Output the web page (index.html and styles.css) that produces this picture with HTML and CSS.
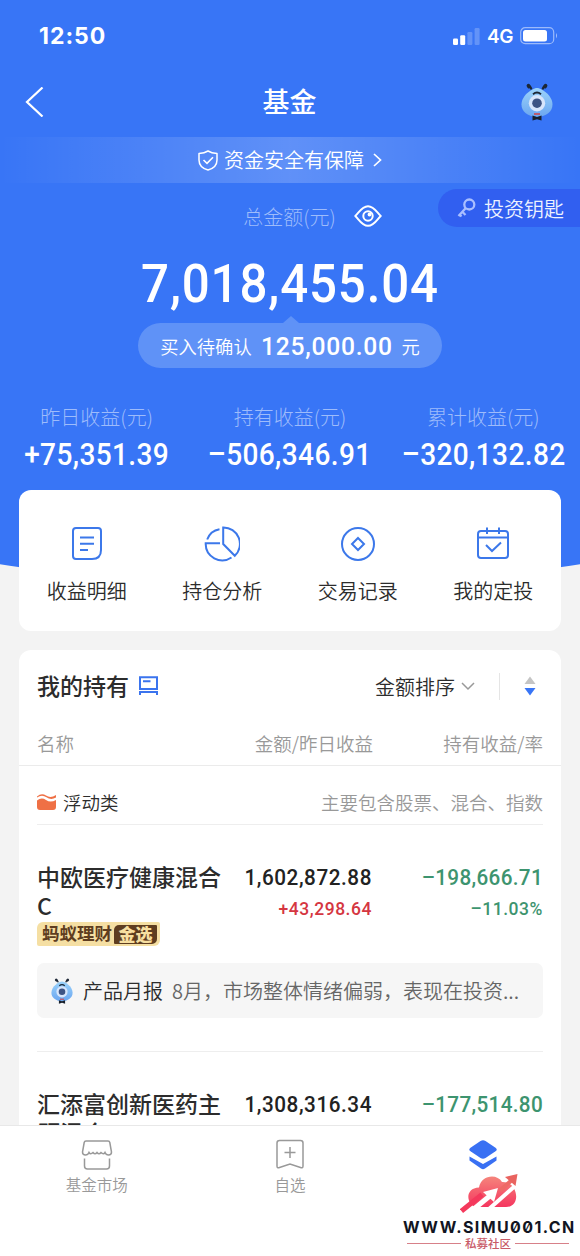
FILE: index.html
```html
<!DOCTYPE html>
<html lang="zh-CN">
<head>
<meta charset="utf-8">
<title>基金</title>
<link rel="stylesheet" href="styles.css">
</head>
<body>
<svg class="defs" width="0" height="0">
  <defs>
    <linearGradient id="face" x1="0" y1="0" x2="0" y2="1"><stop offset="0" stop-color="#9bd3fb"/><stop offset="1" stop-color="#6ba6f0"/></linearGradient>
    <linearGradient id="cloud" x1="0" y1="0" x2="0" y2="1"><stop offset="0" stop-color="#f5857c"/><stop offset="1" stop-color="#f5365f"/></linearGradient>
    <symbol id="ant" viewBox="0 0 32 38">
      <path d="M10.5 6.500Q10 3.500 7 2.500M21.500 6.500Q22 3.500 25 2.500" fill="none" stroke="#1c2736" stroke-width="2"/>
      <ellipse cx="7.800" cy="3.200" rx="1.900" ry="2.500" transform="rotate(-40 7.800 3.200)" fill="#1c2736"/>
      <ellipse cx="24.200" cy="3.200" rx="1.900" ry="2.500" transform="rotate(40 24.200 3.200)" fill="#1c2736"/>
      <path d="M16 5C20 5 31.500 12 31.500 21.500C31.500 28 26 33.500 16 34C6 33.500 .5 28 .5 21.500C.5 12 12 5 16 5Z" fill="url(#face)"/>
      <path d="M12 11.300Q16 7.800 20 11.300" fill="none" stroke="#1c2736" stroke-width="1.800"/>
      <circle cx="16" cy="20.200" r="8.200" fill="#d7e5fb"/>
      <circle cx="16" cy="20.200" r="4.800" fill="#3d5484"/>
      <path d="M13 31H19" stroke="#cf4a4f" stroke-width="1.600"/>
      <path d="M11.500 32.500L16 34L20.500 32.500V37.500L16 36.300L11.500 37.500Z" fill="#18202c"/>
    </symbol>
  </defs>
</svg>
<div class="screen">
  <header class="hero">
    <div class="hero-bg"></div>
    <div class="status">
      <span class="time">12:50</span>
      <div class="status-right">
        <svg width="27" height="17" viewBox="0 0 27 17"><rect x="0" y="10.500" width="5" height="6.500" rx="1.200" fill="#fff"/><rect x="7.200" y="7.300" width="5" height="9.700" rx="1.200" fill="#fff"/><rect x="14.400" y="4" width="5" height="13" rx="1.200" fill="#fff" opacity=".22"/><rect x="21.600" y="0" width="5" height="17" rx="1.200" fill="#fff" opacity=".22"/></svg>
        <span class="net">4G</span>
        <svg width="38" height="18" viewBox="0 0 38 18"><rect x=".7" y=".7" width="33" height="16" rx="4.500" fill="none" stroke="#fff" stroke-opacity=".5" stroke-width="1.200"/><rect x="3" y="3" width="24" height="11.500" rx="2.500" fill="#fff"/><path d="M36 6Q38 8.700 36 11.500Z" fill="#fff" opacity=".55"/></svg>
      </div>
    </div>
    <nav class="nav">
      <svg class="back" width="19" height="30" viewBox="0 0 19 30"><path d="M17.500 .5L2 15L17.500 29.500" fill="none" stroke="#fff" stroke-width="2.200"/></svg>
      <h1>基金</h1>
      <svg class="avatar" width="32" height="38"><use href="#ant"/></svg>
    </nav>
    <div class="safe">
      <svg width="20" height="21" viewBox="0 0 20 21"><path d="M10 1C12.500 2.600 15.500 3.300 19 3.400V10C19 15.500 14.500 18.800 10 20C5.500 18.800 1 15.500 1 10V3.400C4.500 3.300 7.500 2.600 10 1Z" fill="none" stroke="#fff" stroke-width="1.500" stroke-linejoin="round"/><path d="M5.500 10L9 13.300L15 7.300" fill="none" stroke="#fff" stroke-width="1.600"/></svg>
      <span>资金安全有保障</span>
      <svg width="9" height="14" viewBox="0 0 9 14"><path d="M1 1L7.500 7L1 13" fill="none" stroke="#fff" stroke-width="1.700"/></svg>
    </div>
    <div class="total-label">
      <span>总金额(元)</span>
      <svg width="28" height="22" viewBox="0 0 28 22"><path d="M1.200 11C4.500 8.500 7.500 1.200 14 1.200S23.500 8.500 26.800 11C23.500 13.500 20.500 20.800 14 20.800S4.500 13.500 1.200 11Z" fill="none" stroke="#fff" stroke-width="1.900" stroke-linejoin="round"/><circle cx="14" cy="11" r="4.700" fill="none" stroke="#fff" stroke-width="2"/><circle cx="15.500" cy="9.500" r="1.900" fill="#fff"/></svg>
    </div>
    <div class="key">
      <svg width="19" height="20" viewBox="0 0 19 20" fill="none" stroke="#aabfff" stroke-width="2.300"><circle cx="12.300" cy="6.500" r="5"/><path d="M8.600 10.200L1.500 18M5.300 13.800L8.500 17M2.500 16.500L4.500 18.500"/></svg>
      <span>投资钥匙</span>
    </div>
    <div class="amount num">7,018,455.04</div>
    <div class="pending"><span>买入待确认</span><b class="num">125,000.00</b><span>元</span></div>
    <div class="stats">
      <div><label>昨日收益(元)</label><span class="num">+75,351.39</span></div>
      <div><label>持有收益(元)</label><span class="num">–506,346.91</span></div>
      <div><label>累计收益(元)</label><span class="num">–320,132.82</span></div>
    </div>
  </header>
  <main>
    <section class="card tools">
      <div><svg width="36" height="36" viewBox="0 0 36 36"><path d="M7 2H29Q32 2 32 5V24Q32 33 23 33H7Q4 33 4 30V5Q4 2 7 2Z"/><path d="M11 11.500H25M11 17.800H25M11 24H19"/></svg><span>收益明细</span></div>
      <div><svg width="36" height="36" viewBox="0 0 36 36"><path d="M19.200 1.500V18L30.800 29.800A16.400 16.400 0 0 0 19.200 1.500Z"/><path d="M15.500 3.300A16 16 0 0 0 3.200 13.500M16 17.300H1.700A16.500 16.500 0 0 0 27.500 31.500"/></svg><span>持仓分析</span></div>
      <div><svg width="36" height="36" viewBox="0 0 36 36"><circle cx="18" cy="18" r="16"/><path d="M18 12L24 18L18 24L12 18Z"/></svg><span>交易记录</span></div>
      <div><svg width="36" height="36" viewBox="0 0 36 36"><rect x="3" y="5" width="30" height="27" rx="3"/><path d="M3 11.500H33M12 1.500V8M24 1.500V8M11 19L17 25L26 16.500"/></svg><span>我的定投</span></div>
    </section>
    <section class="card holdings">
      <div class="hold-head">
        <h2>我的持有</h2>
        <svg width="19" height="20" viewBox="0 0 19 20" fill="none" stroke="#3b74ee" stroke-width="2"><path d="M1 1.300H18V13H1ZM4 5.200H11.500M1 19V16H18V19"/></svg>
        <span class="sort">金额排序</span>
        <svg class="chev" width="14" height="9" viewBox="0 0 14 9"><path d="M1 1L7 7L13 1" fill="none" stroke="#999" stroke-width="1.500"/></svg>
        <i class="sep"></i>
        <svg class="order" width="12" height="20" viewBox="0 0 12 20"><path d="M6 .5L11.500 8H.5Z" fill="#c4c4c4"/><path d="M.5 12H11.500L6 19.500Z" fill="#3875f6"/></svg>
      </div>
      <div class="cols"><span>名称</span><span>金额/昨日收益</span><span>持有收益/率</span></div>
      <div class="category">
        <svg width="19" height="16" viewBox="0 0 19 16"><path d="M0 2.500Q4.500-1.500 9 1.500T19 1V3.500Q14 6.500 9.500 3.300T0 3.500Z" fill="#ef7045"/><path d="M0 6.500Q4.500 3 9 6T19 6V13Q19 16 16 16H3Q0 16 0 13Z" fill="#ef7045"/></svg>
        <span>浮动类</span><em>主要包含股票、混合、指数</em>
      </div>
      <article class="fund">
        <div class="fund-row">
          <div class="name">中欧医疗健康混合C</div>
          <div class="val num"><b>1,602,872.88</b><small class="up">+43,298.64</small></div>
          <div class="val num down"><b>–198,666.71</b><small>–11.03%</small></div>
        </div>
        <div class="badge"><span>蚂蚁理财</span><b>金选</b></div>
        <div class="report"><svg width="22" height="26"><use href="#ant"/></svg><span>产品月报</span><p>8月，市场整体情绪偏弱，表现在投资...</p></div>
      </article>
      <article class="fund second">
        <div class="fund-row">
          <div class="name">汇添富创新医药主题混合</div>
          <div class="val num"><b>1,308,316.34</b></div>
          <div class="val num down"><b>–177,514.80</b></div>
        </div>
      </article>
    </section>
  </main>
  <footer class="tabs">
    <div><svg width="32" height="32" viewBox="0 0 32 32"><path d="M5 2H27Q28.500 2 28.800 3.500L30.500 13Q30.500 16 27.500 16Q25 16 24 13.500Q22.500 16 20 13.500Q18 16 16 13.500Q14 16 12 13.500Q9.500 16 8 13.500Q7 16 4.500 16Q1.500 16 1.500 13L3.200 3.500Q3.500 2 5 2ZM3.500 19.500V27Q3.500 30 6.500 30H25.500Q28.500 30 28.500 27V19.500"/></svg><span>基金市场</span></div>
    <div><svg width="32" height="32" viewBox="0 0 32 32"><path d="M5.500 1.500H26.500Q29 1.500 29 4V27Q29 29.500 26.500 28.500L16 25L5.500 28.500Q3 29.500 3 27V4Q3 1.500 5.500 1.500ZM16 8V19M10.500 13.500H21.500"/></svg><span>自选</span></div>
    <div><svg class="layers" width="32" height="32" viewBox="0 0 32 32"><path d="M13.500 2Q16 .6 18.500 2L28.500 8.700Q31 10.500 28.500 12.300L18.500 19Q16 20.500 13.500 19L3.500 12.300Q1 10.500 3.500 8.700Z"/><path d="M2.500 17.500L16 25L29.500 17.500V21.500L18 29.500Q16 30.800 14 29.500L2.500 21.500Z"/></svg></div>
    <aside class="mark">
      <svg width="58" height="40" viewBox="0 0 58 40"><path d="M15 34C6 30 5 15 19 14.500C21 2 37 0 42 9C58 8 62 34 46 34Z" fill="url(#cloud)"/><path d="M9 40L31 22" stroke="#fff" stroke-width="5"/><path d="M23 19L38 15L34 29Z" fill="#fff"/><path d="M29 36L55 13" stroke="#fff" stroke-width="4"/><path d="M1.500 38L22 21.500" stroke="#f4395c" stroke-width="5"/><path d="M40 17.500L52 7" stroke="#ee6a66" stroke-width="4"/><path d="M45 4L57.500 1L55.500 13Z" fill="#e9635f"/></svg>
      <strong>WWW.SIMU001.CN</strong>
      <div class="community"><span>私募社区</span></div>
    </aside>
  </footer>
</div>
</body>
</html>
```
FILE: styles.css
```css
* { box-sizing: border-box; }
body { margin: 0; background: #f3f3f3; font-family: "Noto Sans CJK SC", sans-serif; font-weight: 350; color: #2c2c2c; }
h1, h2, p { margin: 0; }
svg { display: block; flex: none; }
.defs { position: absolute; }
.num { font-family: Roboto, sans-serif; font-weight: 500; }
.screen { width: 580px; height: 1256px; display: flex; flex-direction: column; overflow: hidden; }

.hero { position: relative; flex: none; height: 490px; color: #fff; }
.hero-bg { position: absolute; z-index: -1; left: -60px; right: -60px; top: 0; height: 581px; background: #3875f6; border-radius: 0 0 50% 50% / 0 0 38px 38px; }
.status { display: flex; justify-content: space-between; align-items: center; height: 72px; padding: 0 22px 0 39px; }
.time { font: 700 23px Inter, sans-serif; letter-spacing: 1px; }
.status-right { display: flex; align-items: center; gap: 7px; }
.net { font: 600 19px Inter, sans-serif; letter-spacing: -.4px; }
.nav { display: flex; justify-content: space-between; align-items: center; height: 65px; padding: 0 27px 5px 25px; }
.back { margin-right: 14px; }
.nav h1 { font-size: 27px; font-weight: 500; line-height: 40px; padding-bottom: 3px; }
.safe { display: flex; align-items: center; justify-content: center; height: 46px; font-size: 20px; line-height: 46px; gap: 6px; background: linear-gradient(90deg, rgba(255,255,255,0), rgba(255,255,255,.2) 50%, rgba(255,255,255,0)); }
.safe svg:last-child { margin-left: 3px; }
.total-label { display: flex; align-items: center; justify-content: center; gap: 18px; height: 66px; margin-left: 45px; width: 535px; font-size: 20px; font-weight: 300; }
.total-label span { color: #9ebcfb; }
.key { position: absolute; right: 0; top: 189px; width: 142px; height: 38px; padding-left: 19px; display: flex; align-items: center; gap: 8px; background: #315ff0; border-radius: 19px 0 0 19px; font-size: 20px; color: #edf2ff; }
.amount { height: 74px; line-height: 71px; text-align: center; font-size: 53px; letter-spacing: .9px; transform: scaleX(.93); }
.pending { position: relative; width: 304px; height: 45px; margin: 0 auto; display: flex; align-items: center; justify-content: center; gap: 9px; background: #5f92f7; border-radius: 23px; font-size: 18.300px; }
.pending::before { content: ""; position: absolute; left: 145px; top: -7px; border: solid transparent; border-width: 0 8px 7px; border-bottom-color: #5f92f7; }
.pending b { font-size: 26.500px; letter-spacing: .8px; margin: 0 -5px; transform: scaleX(.93); }
.stats { display: grid; grid-template-columns: repeat(3, 1fr); padding-top: 33px; text-align: center; }
.stats div { display: flex; flex-direction: column; }
.stats label { font-size: 20px; font-weight: 300; line-height: 32px; color: #9ebcfb; }
.stats span { font-size: 30.500px; line-height: 44px; letter-spacing: .4px; transform: scaleX(.92); }

main { padding: 0 19px; flex: 1; min-height: 0; }
.card { background: #fff; border-radius: 12px; }
.tools { position: relative; height: 141px; display: grid; grid-template-columns: repeat(4, 1fr); padding-top: 36px; }
.tools div { display: flex; flex-direction: column; align-items: center; gap: 14px; font-size: 20px; line-height: 30px; }
.tools svg { fill: none; stroke: #3c78ea; stroke-width: 2; }
.holdings { margin-top: 19px; height: 500px; }
.hold-head { display: flex; align-items: center; height: 73px; padding: 0 25px 1px 18px; }
h2 { font-size: 23px; font-weight: 500; margin-right: 10px; padding-bottom: 2px; }
.sort { margin-left: auto; font-size: 20px; }
.chev { margin-left: 6px; }
.sep { width: 1px; height: 27px; background: #e5e5e5; margin: 0 24px; }
.cols { display: grid; grid-template-columns: 120px 216px 1fr; height: 43px; padding: 0 18px; border-bottom: 1px solid #ebebeb; font-size: 18.500px; line-height: 40px; color: #999; }
.cols span + span { text-align: right; }
.category { display: flex; align-items: center; height: 59px; margin: 0 18px; padding-top: 13px; border-bottom: 1px solid #eee; font-size: 18.500px; }
.category span { margin-left: 7px; }
.category em { margin-left: auto; font-style: normal; color: #999; }
.fund { margin: 0 18px; padding-top: 37px; height: 227px; border-bottom: 1px solid #eee; }
.fund-row { display: grid; grid-template-columns: 188px 147px 1fr; }
.name { font-size: 23px; font-weight: 500; line-height: 29px; }
.val { display: flex; flex-direction: column; text-align: right; letter-spacing: .6px; transform: scaleX(.92); transform-origin: right; }
.val b { font-size: 22.500px; font-weight: 500; line-height: 30px; color: #222; }
.val small { font-size: 19px; line-height: 33px; }
.val .up { color: #d53641; }
.down, .down b { color: #3d946f; }
.down b { letter-spacing: .35px; }
.badge { display: flex; align-items: center; width: 123px; height: 24px; margin-top: -3px; padding: 0 3px 0 5px; gap: 2px; border-radius: 6px 2px; background: #f5dfa3; color: #5e3d20; font-size: 17.500px; font-weight: 700; line-height: 20px; }
.badge span { padding-bottom: 2px; }
.badge b { flex: 1; height: 19px; background: #5e3d20; color: #f7dfa0; text-align: center; border-radius: 5px 1px; font-size: 17px; line-height: 17px; }
.report { display: flex; align-items: center; height: 55px; margin-top: 17px; padding: 0 14px; background: #f6f6f6; border-radius: 7px; font-size: 20px; }
.report span { margin: 0 9px 0 10px; }
.report p { white-space: nowrap; color: #666; }

.tabs { position: relative; z-index: 1; height: 131px; flex: none; display: grid; grid-template-columns: repeat(3, 1fr); padding-top: 13px; background: #fff; border-top: 1px solid #e8e8e8; }
.tabs > div { display: flex; flex-direction: column; align-items: center; gap: 1px; font-size: 15.500px; line-height: 24px; color: #999; }
.tabs > div svg { fill: none; stroke: #999; stroke-width: 1.500; }
.tabs > div .layers { fill: #3970f3; stroke: none; }
.mark { position: absolute; left: 403px; top: 47px; width: 177px; height: 84px; display: flex; flex-direction: column; align-items: flex-start; background: #fff; }
.mark svg { margin-left: 57px; }
.mark strong { font: 700 16px/22px Inter, sans-serif; font-feature-settings: "zero"; letter-spacing: 1.400px; color: #111522; margin-top: 3px; white-space: nowrap; }
.community { width: 162px; margin-left: 4px; margin-top: -2px; display: flex; align-items: center; gap: 4px; font-size: 11.500px; font-weight: 500; line-height: 14px; color: #c85a67; }
.community::before, .community::after { content: ""; flex: 1; height: 1px; background: #d78089; }
```
